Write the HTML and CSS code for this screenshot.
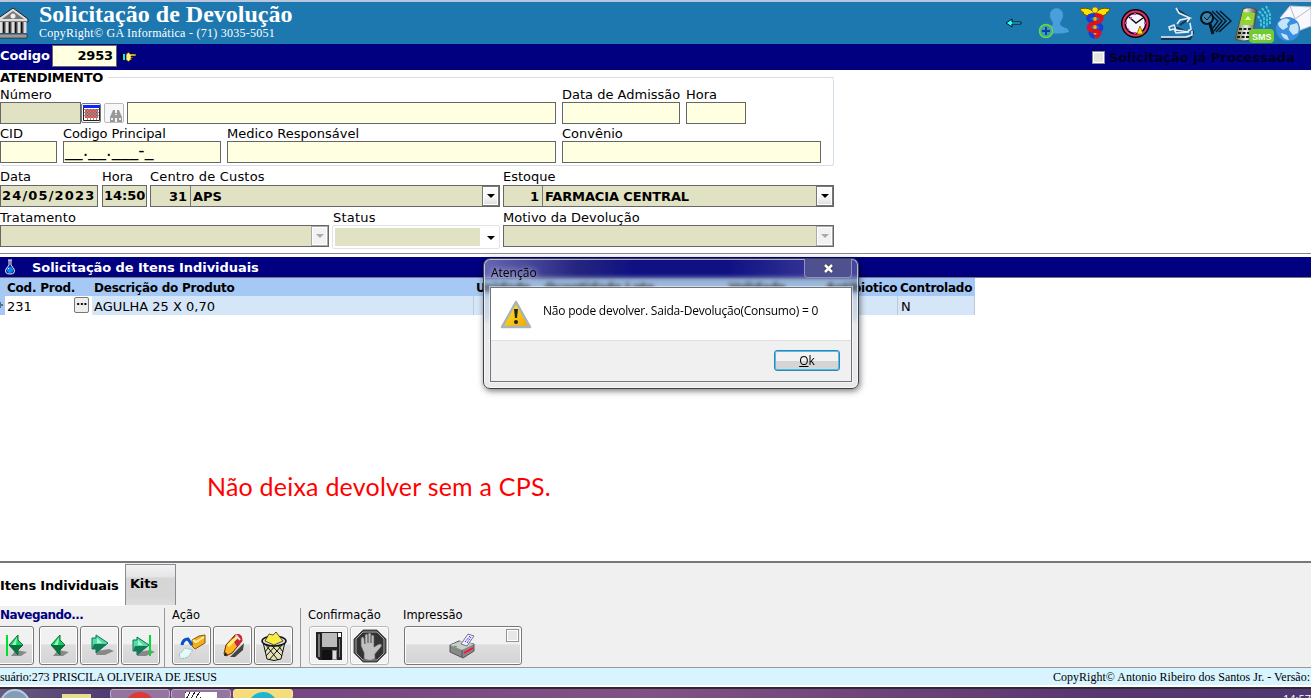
FILE: index.html
```html
<!DOCTYPE html>
<html lang="pt-BR">
<head>
<meta charset="utf-8">
<title>Solicitação de Devolução</title>
<link rel="stylesheet" href="styles.css">
</head>
<body>
<div class="app">
  <header class="header">
    <svg class="bank" width="29" height="32" viewBox="0 0 29 32"><path d="M-3 12 13 1 28 12v3H-3z" fill="#ddd" stroke="#222"/><path d="M2 12 13 4l11 8z" fill="#777"/><circle cx="13" cy="9" r="2.5" fill="#eee"/><path d="M-2 15h28v11H-2z" fill="#444"/><path d="M1 15v11M7 15v11M13 15v11M19 15v11M25 15v11" stroke="#ddd" stroke-width="3"/><path d="M3.500 15v11M9.500 15v11M15.500 15v11M21.500 15v11" stroke="#111"/><path d="M-3 27h30v4H-3z" fill="#bbb" stroke="#333"/><path d="M0 29h26" stroke="#777"/></svg>
    <div class="titles">
      <h1 class="title">Solicitação de Devolução</h1>
      <div class="subtitle">CopyRight© GA Informática - (71) 3035-5051</div>
    </div>
    <div class="header-icons">
      <svg width="18" height="10" viewBox="0 0 18 10"><path d="M1 5 7 1v3h9v2H7v3z" fill="#3ff" stroke="#012"/></svg>
      <svg class="i-user" width="34" height="34" viewBox="0 0 34 34"><path d="M13 9c0-9 13-9 13 0 0 5-3 6-3 9 1 4 9 3 9 8-8 2-18 2-26 0 0-5 9-4 10-8 0-3-3-4-3-9z" fill="#4a9edb"/><circle cx="9" cy="25" r="6.500" fill="#3b9fb4" stroke="#63dc38" stroke-width="1.500"/><path d="M5 25h8M9 21v8" stroke="#153ba5" stroke-width="2"/></svg>
      <svg class="i-med" width="32" height="34" viewBox="0 0 32 34"><path d="M15 7C11 1 5 2 1 3c1 3 3 3 4 4l-1 1 5 2-1 2 7-1zM17 7c4-6 10-5 14-4-1 3-3 3-4 4l1 1-5 2 1 2-7-1z" fill="#ffe100" stroke="#6e5600"/><path d="M16 4v28" stroke="#f5b000" stroke-width="3"/><path d="M16 9c-9 0-9 6 0 8s8 8 0 8-4 5 0 6" fill="none" stroke="#193ad5" stroke-width="4"/><path d="M16 9c9 0 9 6 0 8s-8 8 0 8 4 5 0 6" fill="none" stroke="#dd1021" stroke-width="4"/><circle cx="16" cy="4" r="3" fill="#ffdf16" stroke="#6e5600" stroke-width=".5"/></svg>
      <svg class="i-clock" width="29" height="29" viewBox="0 0 29 29"><circle cx="14.500" cy="14.500" r="12" fill="#f7f6ff" stroke="#180009" stroke-width="5"/><circle cx="14.500" cy="14.500" r="12" fill="none" stroke="#e03567" stroke-width="2"/><path d="m8 8 7 6 7-5" fill="none" stroke="#111" stroke-width="1.500"/><path d="M14 4v2M14 23v2M4 14h2M23 14h2M7 21l1-1M9 9l2 0" stroke="#d044ce" stroke-width="2"/><path d="m19 17 3 8h-6z" fill="#ffeb18" stroke="#a67700"/></svg>
      <svg class="i-scope" width="35" height="35" viewBox="0 0 35 35"><g fill="none" stroke="#16334d" stroke-width="2"><path d="m19 4 12 8-10 7M15 21l13 5M2 33h29l4-8"/></g><g fill="none" stroke="#e5edf2" stroke-width="1.600"><path d="m17 2 3 5 11 5-10 2-3 4M31 12l-3 4M10 21l5-2 2 5 13 2-13 1-2-4-4 1zM31 17l1 6-3 2M2 31h25l6-2v-4"/></g></svg>
      <svg class="i-search" width="33" height="30" viewBox="0 0 33 30"><g fill="none" stroke="#03121b" stroke-width="1.300"><path d="m13 3 10 10-8 10M17 3l10 10-10 11M21 3l11 10-12 11M11 6l8 7-5 7"/></g><circle cx="8" cy="10" r="6" fill="#3786ae" stroke="#03121b" stroke-width="2"/><path d="m5 9 3 3 4-5" fill="none" stroke="#111"/><path d="m11 16 3 10" stroke="#03121b" stroke-width="3"/></svg>
      <svg class="i-sms" width="41" height="39" viewBox="0 0 41 39"><defs><linearGradient id="phone" x2="1"><stop stop-color="#5b653c"/><stop offset=".5" stop-color="#eee"/><stop offset="1" stop-color="#474747"/></linearGradient></defs><path d="M9 5q7-3 14 1l-5 29q-8 4-17 0z" fill="url(#phone)" stroke="#4b5338"/><path d="m9 8 12 1-2 12H6z" fill="#8ed52c"/><path d="m11 16 3-4 3 4z" fill="#efffc0"/><path d="M5 25h12M4 29h12M3 33h12" stroke="#171d16" stroke-width="2" stroke-dasharray="3 1.500"/><path d="m25 7 5 6v12M28 4l5 7v12M32 2l4 8v10M24 12l3 5v6" fill="none" stroke="#42d1df" stroke-width="1.800" stroke-dasharray="3 1"/><rect x="15" y="25" width="25" height="14" rx="4" fill="#72c930"/><text x="18" y="36" class="sms-text">SMS</text></svg>
      <svg class="i-mail" width="36" height="38" viewBox="0 0 36 38"><path d="m5 14 10-12 21 1v19l-13 5z" fill="#f8f8fd" stroke="#bbc4d0"/><path d="m15 2 5 13 16-11" fill="none" stroke="#b9bdc7"/><circle cx="13" cy="25" r="12" fill="#398ee0"/><path d="M3 19c5-6 10-5 12-3l-3 4 1 3-5 3c-2-2-5-3-5-7zM15 21l7-2c2 3 2 7 1 10l-5 2-4-5zM6 29l6 2 2 5c-4 0-7-3-8-7z" fill="#c7e4fa"/></svg>
    </div>
  </header>

  <div class="code-bar">
    <span class="code-label">Codigo</span>
    <div class="code-input">2953</div>
    <svg class="hand" width="16" height="10" viewBox="0 0 16 10"><path d="M0 2h2v6H0z"/><path d="M2 2h2v6H2z" fill="#0ef"/><path d="M5 2 8 0l1 2h6v2h-5v1h2v1h-2v1h1v1H9L8 10 5 8z" fill="#ffed76" stroke="#201700" stroke-width=".7"/></svg>
    <div class="processed"><span class="check"></span><span class="processed-label">Solicitação já Processada</span></div>
  </div>

  <main class="form">
    <section class="fieldset">
      <div class="legend"><span>ATENDIMENTO</span><i></i></div>
      <div class="fieldset-body">
        <div class="row row-a">
          <div class="field w-num"><label>Número</label><div class="num-line"><div class="box off num-box"></div>
            <span class="mini cal"><svg width="17" height="16" viewBox="0 0 17 16"><path d="M.5.500h16v15H.5z" fill="#fff" stroke="#222"/><path d="M0 0h17v3H0z" fill="#12f"/><path d="M2 6h13M2 9h13M2 12h13" stroke="#e11" stroke-width="1.500" stroke-dasharray="2 1"/><path d="M1 4.500h15M1 7.500h15M1 10.500h15M4.500 4v11M7.500 4v11M10.500 4v11M13.500 4v11" stroke="#444" stroke-width=".6"/></svg></span>
            <span class="mini find"><svg width="14" height="12" viewBox="0 0 14 12"><path d="M4 0h2v3h2V0h2l3 7v5H8V8H6v4H1V7z" fill="#999"/><path d="M2 8h2v2H2zM10 8h2v2h-2zM6 4h2v1H6z" fill="#eee"/></svg></span>
            <div class="box name-box"></div></div></div>
          <div class="field w-adm"><label>Data de Admissão</label><div class="box"></div></div>
          <div class="field w-hr"><label>Hora</label><div class="box"></div></div>
        </div>
        <div class="row row-b">
          <div class="field w-cid"><label>CID</label><div class="box"></div></div>
          <div class="field w-cod"><label class="tight">Codigo Principal</label><div class="box mask">__.__.___-_</div></div>
          <div class="field w-doc"><label>Medico Responsável</label><div class="box"></div></div>
          <div class="field w-conv"><label>Convênio</label><div class="box"></div></div>
        </div>
      </div>
    </section>
    <div class="row row-c">
      <div class="field w-date"><label>Data</label><div class="box off value date">24/05/2023</div></div>
      <div class="field w-time"><label>Hora</label><div class="box off value">14:50</div></div>
      <div class="field w-cc"><label class="loose">Centro de Custos</label><div class="box off combo"><span class="key key-a">31</span><span class="choice">APS</span><span class="drop"></span></div></div>
      <div class="field w-est"><label>Estoque</label><div class="box off combo"><span class="key key-b">1</span><span class="choice tight">FARMACIA CENTRAL</span><span class="drop"></span></div></div>
    </div>
    <div class="row row-d">
      <div class="field w-trat"><label class="loose">Tratamento</label><div class="box off combo"><span class="choice"></span><span class="drop dim"></span></div></div>
      <div class="field w-stat"><label class="status-label">Status</label><div class="status-box"><span class="status-fill"></span><span class="status-arrow"></span></div></div>
      <div class="field w-est"><label>Motivo da Devolução</label><div class="box off combo"><span class="choice"></span><span class="drop dim"></span></div></div>
    </div>
  </main>

  <div class="section-bar">
    <svg width="12" height="16" viewBox="0 0 12 16"><path d="M4 1h4M5 1v5L2 10q-2 5 4 5t4-5L7 6V1" fill="#128" stroke="#eee"/><circle cx="6" cy="11" r="3" fill="#08f"/><path d="m4 10 1-1" stroke="#fff"/></svg>
    <h2 class="section-title">Solicitação de Itens Individuais</h2>
  </div>
  <div class="grid">
    <div class="grid-head"><span class="c-mark"></span><span class="c-code">Cod. Prod.</span><span class="c-desc">Descrição do Produto</span><span class="c-unit">Unidade</span><span class="c-lot">Quantidade Lote</span><span class="c-val">Validade</span><span class="c-anti">Antibiotico</span><span class="c-ctl">Controlado</span></div>
    <div class="grid-row"><span class="c-mark"><svg width="3" height="18" viewBox="0 0 3 18"><path d="M0 7h1M0 9h3M0 11h1" stroke="#111"/></svg></span><span class="c-code">231<b class="dots">···</b></span><span class="c-desc">AGULHA 25 X 0,70</span><span class="c-unit"></span><span class="c-lot"></span><span class="c-val"></span><span class="c-anti"></span><span class="c-ctl">N</span></div>
  </div>
  <div class="canvas"><p class="note">Não deixa devolver sem a CPS.</p></div>

  <div class="tabs"><div class="tab active">Itens Individuais</div><div class="tab kits">Kits</div></div>
  <div class="toolbar">
    <div class="group nav"><div class="group-label strong">Navegando...</div><div class="buttons">
      <button class="tool"><svg width="30" height="28" viewBox="0 0 30 28"><path d="m16 18 11 2-6 4h-10z" fill="#888"/><path d="M7 3v21" stroke="#0d3" stroke-width="2"/><path d="M9 13 18 3v5l5 5-5 5v5z" fill="#19d15a" stroke="#0a6e3e"/><path d="M9 13h14l-5 5v5z" fill="#08713d"/><path d="m17 5-5 8h4z" fill="#8fffc2"/></svg></button>
      <button class="tool"><svg width="30" height="28" viewBox="0 0 30 28"><path d="m14 18 11 2-6 4H9z" fill="#888"/><path d="M7 13 16 3v5l5 5-5 5v5z" fill="#19d15a" stroke="#0a6e3e"/><path d="M7 13h14l-5 5v5z" fill="#08713d"/><path d="m15 5-5 8h4z" fill="#8fffc2"/></svg></button>
      <button class="tool"><svg width="30" height="28" viewBox="0 0 30 28"><path d="m12 19 12-2 5 2-9 4h-9z" fill="#888"/><path d="M7 6h4V3l12 8-12 10v-4H7z" fill="#55dda0" stroke="#08735c"/><path d="M9 12h13l-11 9v-4H7z" fill="#147957"/><path d="M12 6v5h5z" fill="#aaffda"/></svg></button>
      <button class="tool"><svg width="30" height="28" viewBox="0 0 30 28"><path d="m12 20 12-2 5 2-9 4h-9z" fill="#888"/><path d="M7 8h4V5l12 8-12 10v-4H7z" fill="#55dda0" stroke="#08735c"/><path d="M9 14h13l-11 9v-4H7z" fill="#147957"/><path d="M12 8v5h5z" fill="#aaffda"/><path d="M24 3v21" stroke="#0d3" stroke-width="2"/></svg></button>
    </div></div>
    <div class="group action"><div class="group-label">Ação</div><div class="buttons">
      <button class="tool"><svg width="30" height="30" viewBox="0 0 30 30"><path d="m15 9 7-4 6-1v8l-10 6-3-3z" fill="#f2ae22" stroke="#8c5900"/><path d="m16 9 3 2 8-5" fill="none" stroke="#fff2a0" stroke-width="2"/><path d="M5 14q1-6 6-6l4 6" stroke="#0752c7" stroke-width="3" fill="none"/><path d="m2 24 6-7 8 2-5 7-7 2z" fill="#e5fafa" stroke="#8fbbc0" stroke-dasharray="2 1"/></svg></button>
      <button class="tool"><svg width="30" height="30" viewBox="0 0 30 30"><path d="m12 26 14-14-1 7-8 7z" fill="#444"/><path d="m6 23 2-9 9-10q7-2 7 6L14 22l-6 3z" fill="#ffb51b" stroke="#712700"/><path d="m14 7 5-4q6 0 5 7l-5 6z" fill="#ce2434"/><path d="m10 15 9-9" stroke="#fff37b" stroke-width="3"/><path d="m18 4 4 5" stroke="#e8e8e8" stroke-width="2"/><path d="m6 25 4-1-3-3z" fill="#222"/></svg></button>
      <button class="tool"><svg width="30" height="32" viewBox="0 0 30 32"><path d="m4 12 4 17q7 3 14 0l4-17-11 4z" fill="#e4e1b4" stroke="#111"/><path d="m6 14 13 16M11 14l12 12M18 14l6 8M24 14 10 30M18 14 7 26M12 14l-6 8" stroke="#111"/><ellipse cx="15" cy="11" rx="12" ry="5" fill="#ddd" stroke="#111" stroke-width="1.500"/><path d="m6 11 4-7 4 1 3-3 7 9-9 4z" fill="#f9ea44" stroke="#111" stroke-width=".7"/></svg></button>
    </div></div>
    <div class="group confirm"><div class="group-label">Confirmação</div><div class="buttons">
      <button class="tool pale"><svg width="26" height="28" viewBox="0 0 26 28"><path d="M0 0h26v28H3l-3-3z" fill="#222"/><path d="M6 1h15v14H6z" fill="#bbb"/><path d="M22 1h3v4h-3z" fill="#fff"/><path d="M2 2h2v23H2zM23 7h1v18h-1z" fill="#777"/><path d="M6 18h10v10H6z" fill="#111"/><path d="M16 18h5v10h-5z" fill="#888"/><path d="M17 19h3v8h-3z" fill="#ddd"/></svg></button>
      <button class="tool pale"><svg width="34" height="34" viewBox="0 0 34 34"><path d="M10 1h14l9 9v14l-9 9H10l-9-9V10z" fill="#333" stroke="#555"/><path d="M10 3h14l7 7v14l-7 7H10l-7-7V10z" fill="none" stroke="#aaa"/><path d="M11 30v-6l-3-7V9q2-2 3 0l1 6V6q2-2 3 0v8-9q2-2 3 0v9-7q2-2 3 0v11l5-3q4 0 2 3l-6 7v5q-5 3-11 0z" fill="#c0c0c0" stroke="#555" stroke-width=".7"/></svg></button>
    </div></div>
    <div class="group print"><div class="group-label">Impressão</div><button class="tool wide"><svg width="30" height="26" viewBox="0 0 30 26"><path d="m2 12 9-4 15 3v7l-11 7-13-6z" fill="#888" stroke="#555"/><path d="m2 12 12 5 12-6-13-3z" fill="#ccc"/><path d="M14 17v7" stroke="#555"/><path d="m13 11 7-10 6 2-7 10z" fill="#eef" stroke="#777"/><path d="m17 9 5-6M19 10l4-6" stroke="#33f" stroke-dasharray="2 1"/><path d="m16 20 9-5" stroke="#f13" stroke-width="2"/><path d="m6 13 3 1" stroke="#0c2"/></svg><span class="print-check"></span></button></div>
  </div>
  <footer class="statusbar"><span class="user">suário:273 PRISCILA OLIVEIRA DE JESUS</span><span class="copy">CopyRight© Antonio Ribeiro dos Santos Jr. - Versão:</span></footer>
  <div class="taskbar"><span class="orb"></span><span class="folder"></span><span class="task"><i class="dot red"></i></span><span class="task"><i class="paper"></i></span><span class="task gold"><i class="dot blue"></i></span><span class="time">14:57</span></div>

  <div class="dialog" role="alertdialog">
    <div class="dialog-title"><span>Atenção</span><span class="close"><svg width="11" height="9" viewBox="0 0 11 9"><path d="m2 1 7 7M9 1 2 8" stroke="#333c" stroke-width="4"/><path d="m2 1 7 7M9 1 2 8" stroke="#fff" stroke-width="2.500"/></svg></span></div>
    <div class="dialog-body">
      <div class="message"><svg width="32" height="29" viewBox="0 0 32 29"><defs><linearGradient id="warn" x2="1" y2="1"><stop stop-color="#ffef25"/><stop offset="1" stop-color="#efa400"/></linearGradient></defs><path d="M16 2 30 27H2z" fill="url(#warn)" stroke="#aab2bb" stroke-width="2.500" stroke-linejoin="round"/><path d="M14 9h4l-1 9h-2z" fill="#222"/><circle cx="16" cy="22" r="2" fill="#222"/></svg><span>Não pode devolver. Saida-Devolução(Consumo) = 0</span></div>
      <div class="dialog-actions"><button class="ok"><u>O</u>k</button></div>
    </div>
  </div>
</div>
</body>
</html>
```
FILE: styles.css
```css
* { box-sizing: border-box; }
body { margin: 0; overflow: hidden; background: #fff; color: #000; font: 13px "DejaVu Sans", sans-serif; }
.app { position: relative; width: 1311px; height: 698px; overflow: hidden; white-space: nowrap; display: flex; flex-direction: column; }
svg { display: block; flex: none; }
h1, h2, p { margin: 0; }
button { padding: 0; font: inherit; }
.header { height: 44px; flex: none; display: flex; background: #1d78b0; border-top: 2px solid #b9c4df; color: #fff; font-family: "Liberation Serif", serif; }
.bank { margin-top: 5px; }
.titles { margin-left: 10px; }
.title { font-size: 24px; line-height: 25px; height: 24px; letter-spacing: .01px; }
.subtitle { font-size: 12px; line-height: 14px; letter-spacing: .25px; }
.header-icons { margin-left: auto; display: flex; align-items: center; }
.header-icons > :first-child { margin-right: 1px; }
.i-user { margin-left: 13px; }
.i-med { margin-left: 8px; }
.i-clock { margin-left: 10px; }
.i-scope { margin-left: 9px; }
.i-search { margin-left: 5px; }
.i-sms { margin-left: 2px; }
.i-mail { margin-left: 0; }
.sms-text { font: bold 9px "Liberation Sans", sans-serif; fill: #fff; }
.code-bar { height: 26px; flex: none; display: flex; align-items: center; background: #000080; color: #fff; font-weight: bold; }
.code-label { width: 52px; padding-bottom: 4px; letter-spacing: -.1px; }
.code-input { width: 65px; height: 22px; margin-top: -2px; background: #ffffe1; border: 1px solid #666; color: #000; text-align: right; padding-right: 3px; line-height: 20px; letter-spacing: -.15px; }
.hand { margin-left: 4px; }
.processed { margin-left: auto; display: flex; align-items: center; color: #000020; }
.check { width: 13px; height: 13px; border: 1px solid #888; background: #e4e4e4; box-shadow: inset 0 0 0 1px #fff; }
.processed-label { width: 202px; margin-left: 4px; }
.form { height: 187px; flex: none; }
.fieldset { height: 96px; width: 834px; }
.legend { height: 15px; display: flex; align-items: center; font-weight: bold; letter-spacing: -.25px; }
.legend i { margin-left: 5px; height: 1px; flex: 1; background: #d5dfe8; }
.fieldset-body { width: 834px; height: 88px; margin-top: -7px; padding-top: 8px; border: solid #d5dfe8; border-width: 0 1px 1px 0; border-radius: 3px; }
.row { display: flex; }
.field { display: flex; flex-direction: column; flex: none; }
.field label { line-height: 17px; height: 17px; }
.tight { letter-spacing: -.12px; }
.loose { letter-spacing: .18px; }
.status-label { padding-left: 1px; letter-spacing: .2px; }
.box { height: 22px; border: 1px solid #666; background: #ffffe1; }
.off { background: #e0e2c3; }
.row-a { height: 39px; }
.row-a label { height: 16px; }
.row-b label { height: 16px; }
.row-c { height: 40px; padding-top: 2px; }
.row-d { padding-top: 3px; }
.row-d label { height: 16px; }
.row-a .field label, .row-b .field label, .row-d .field label { height: 16px; }
.num-line { display: flex; }
.num-box { width: 81px; }
.mini { width: 20px; height: 20px; margin-top: 1px; border: 1px solid #777; border-radius: 2px; background: #f7f7f7; display: flex; align-items: center; justify-content: center; }
.find { margin: 1px 3px 0 3px; border-color: #bbb; padding-top: 5px; padding-left: 3px; }
.name-box { flex: 1; }
.w-num { width: 556px; margin-right: 6px; }
.w-adm { width: 118px; margin-right: 6px; }
.w-hr { width: 60px; }
.w-cid { width: 57px; margin-right: 6px; }
.w-cod { width: 158px; margin-right: 6px; }
.w-doc { width: 329px; margin-right: 6px; }
.w-conv { width: 259px; }
.mask { padding-left: 1px; font-size: 17.500px; line-height: 17px; letter-spacing: .1px; }
.w-date { width: 98px; margin-right: 4px; }
.w-time { width: 45px; margin-right: 3px; }
.w-cc { width: 350px; margin-right: 3px; }
.w-est { width: 331px; }
.w-trat { width: 329px; margin-right: 3px; }
.w-stat { width: 168px; margin-right: 3px; }
.value { padding-left: 1px; font-weight: bold; line-height: 20px; }
.date { letter-spacing: 1.150px; }
.combo { display: flex; font-weight: bold; line-height: 21px; }
.key { text-align: right; padding-right: 3px; border-right: 1px solid #777; }
.key-a { width: 40px; }
.key-b { width: 39px; }
.choice { flex: 1; padding-left: 2px; }
.drop { width: 17px; height: 20px; border: 1px solid #777; background: linear-gradient(#fafafa 50%, #ddd); box-shadow: inset 0 0 0 1px #fff; display: flex; align-items: center; justify-content: center; }
.drop::before, .status-arrow::before { content: ""; border: solid transparent; border-width: 4px 4px 0; border-top-color: #000; }
.drop.dim { background: #f2f2f2; border-color: #aaa; }
.drop.dim::before { border-top-color: #aaa; }
.status-box { height: 24px; border: 1px solid #e1e4ec; border-radius: 2px; display: flex; padding: 2px; }
.status-fill { width: 145px; height: 18px; background: #e0e2c3; }
.status-arrow { flex: 1; display: flex; align-items: center; justify-content: center; padding: 2px 0 0 5px; }
.section-bar { height: 21px; flex: none; background: #000080; color: #fff; display: flex; align-items: center; padding-left: 4px; border-bottom: 1px solid #777; box-shadow: 0 -3px #fff, 0 -4px #858891; }
.section-title { margin-left: 16px; font-size: 13px; line-height: 18px; letter-spacing: -.06px; padding-top: 1px; }
.grid { width: 975px; height: 37px; flex: none; }
.grid-head, .grid-row { display: flex; background: #a6c8f5; height: 18px; line-height: 20px; }
.grid-head { font-weight: bold; font-size: 12px; letter-spacing: -.23px; }
.grid-row { height: 19px; background: #d6e6f9; line-height: 21px; }
.grid span { flex: none; padding-left: 2px; }
.grid .c-mark { width: 5px; padding: 0; background: #a6c8f5; }
.grid .c-code { width: 87px; display: flex; }
.grid-row .c-code { background: #fff; }
.c-desc { width: 382px; }
.c-unit { width: 69px; }
.c-lot { width: 184px; }
.c-val { width: 97px; }
.c-anti { width: 74px; }
.c-ctl { width: 77px; }
.grid-row .c-desc, .grid-row .c-anti, .grid-row .c-ctl { border-right: 1px solid #c1c9d4; }
.grid-row .c-ctl { padding-left: 3px; }
.dots { width: 15px; height: 16px; margin: 1px 3px 0 auto; border: 1px solid #777; border-radius: 2px; background: #eee; line-height: 13px; text-align: center; font-size: 11px; letter-spacing: -.5px; }
.canvas { height: 246px; flex: none; padding: 155px 0 0 207px; }
.note { color: #f00; font: 25px/32px Lato, sans-serif; letter-spacing: .22px; }
.tabs { height: 45px; flex: none; border-top: 2px solid #777; background: #f0f0f0; display: flex; }
.tab { font-weight: bold; }
.active { width: 125px; height: 43px; background: #fff; padding-top: 15px; letter-spacing: -.18px; }
.kits { width: 51px; height: 41px; margin-top: 1px; border: solid #888b95; border-width: 1px 1px 0 1px; background: linear-gradient(#f2f2f2 0, #e5e5e5 30%, #d6d6d6 32% 80%, #ddd); padding: 11px 0 0 4px; letter-spacing: -.2px; }
.toolbar { height: 61px; flex: none; background: #f0f0f0; display: flex; padding-top: 2px; }
.group-label { height: 18px; line-height: 15px; font-size: 11.500px; }
.nav .group-label { font-size: 12px; letter-spacing: -.55px; }
.strong { color: #000080; font-weight: bold; }
.nav { width: 165px; border-right: 1px solid #999; }
.buttons { display: flex; gap: 2px; }
.nav .buttons { margin-left: -5px; }
.nav .tool:first-child { margin-right: 3px; }
.action { width: 136px; padding-left: 7px; border-right: 1px solid #999; }
.confirm { padding-left: 8px; width: 103px; }
.confirm .group-label, .print .group-label { margin-left: -1px; }
.tool { width: 39px; height: 39px; border: 1px solid #777; border-radius: 3px; background: linear-gradient(#f1f1f1 0 46%, #dedede 48%, #d4d4d4); box-shadow: inset 0 0 0 1px #fff; display: flex; align-items: center; justify-content: center; }
.pale { background: #f2f2f2; border-color: #b5babd; }
.wide { width: 118px; position: relative; }
.print-check { position: absolute; right: 2px; top: 2px; width: 13px; height: 13px; border: 1px solid #8e969b; background: #e5e7e9; box-shadow: inset 0 0 0 1px #fff; }
.statusbar { height: 20px; flex: none; display: flex; justify-content: space-between; background: #d7f4ff; border-top: 1px solid #999; font: 12px/18px "Liberation Serif", serif; border-bottom: 2px solid #fff; }
.user { letter-spacing: -.12px; }
.copy { margin-right: 1px; }
.taskbar { height: 11px; flex: none; border-top: 2px solid #302936; background: linear-gradient(90deg, #695a7f, #513b72 110px, #774683 300px, #825284 650px, #59366f 1100px, #503872); display: flex; overflow: hidden; }
.orb { width: 30px; height: 30px; border-radius: 50%; background: #829db8; border: 2px solid #b7cee0; }
.folder { width: 29px; height: 10px; margin: 5px 18px 0 32px; background: #e8dd8c; }
.task { width: 60px; height: 10px; margin-left: 1px; border: 1px solid #c1aaca; border-radius: 3px; background: #9674a0; overflow: hidden; display: flex; justify-content: center; }
.gold { background: #f6dd7c; border-color: #ffea9c; margin-left: 2px; }
.dot { width: 30px; height: 30px; flex: none; border-radius: 50%; margin-top: 2px; background: #dc3938; }
.dot.blue { background: #20b4d2; }
.paper { width: 32px; height: 10px; background: repeating-linear-gradient(120deg, #222 0 1px, transparent 1px 4px) 0 0 / 16px 10px no-repeat #fff; margin-top: 2px; }
.time { margin: 4px 0 0 auto; color: #fff; font: 11px/12px "Open Sans", sans-serif; width: 28px; }
.dialog { position: absolute; left: 483px; top: 258px; width: 376px; height: 131px; border: 1px solid #3b414c; border-radius: 7px; box-shadow: inset 0 0 0 1px #ffffffa0, 1px 2px 6px #0008; background: linear-gradient(90deg, #c8c8e877, #7773 25%, #0000 40% 65%, #9999cc66) 0 0 / 100% 19px no-repeat, linear-gradient(#30308855 0 18px, #77889955 20px, #9aa8b855 30px, #d0dae6 58px, #e9e9e9 66px); padding: 0 6px 6px; font: 12px "Open Sans", sans-serif; backdrop-filter: blur(2px); }
.dialog-title { height: 28px; display: flex; justify-content: space-between; line-height: 28px; padding-left: 1px; text-shadow: 0 0 6px #fff; }
.close { width: 48px; height: 19px; border: 1px solid #9293bd; border-top: 0; border-radius: 0 0 4px 4px; display: flex; justify-content: center; align-items: center; background: #4e508f; }
.dialog-body { border: 1px solid #6f747a; height: 95px; background: #f0f0f0; box-shadow: 0 0 0 1px #ffffff80; }
.message { height: 53px; background: #fff; border-bottom: 1px solid #dfdfdf; display: flex; padding: 12px 0 0 9px; }
.message span { margin-left: 11px; line-height: 21px; letter-spacing: -.22px; }
.dialog-actions { display: flex; justify-content: flex-end; padding: 9px 11px; }
.ok { width: 66px; height: 21px; border: 1px solid #3c7fb1; border-radius: 3px; background: linear-gradient(#f2f2f2 50%, #d5d5d5 52%); box-shadow: inset 0 0 0 1px #47c4eb; }
```
